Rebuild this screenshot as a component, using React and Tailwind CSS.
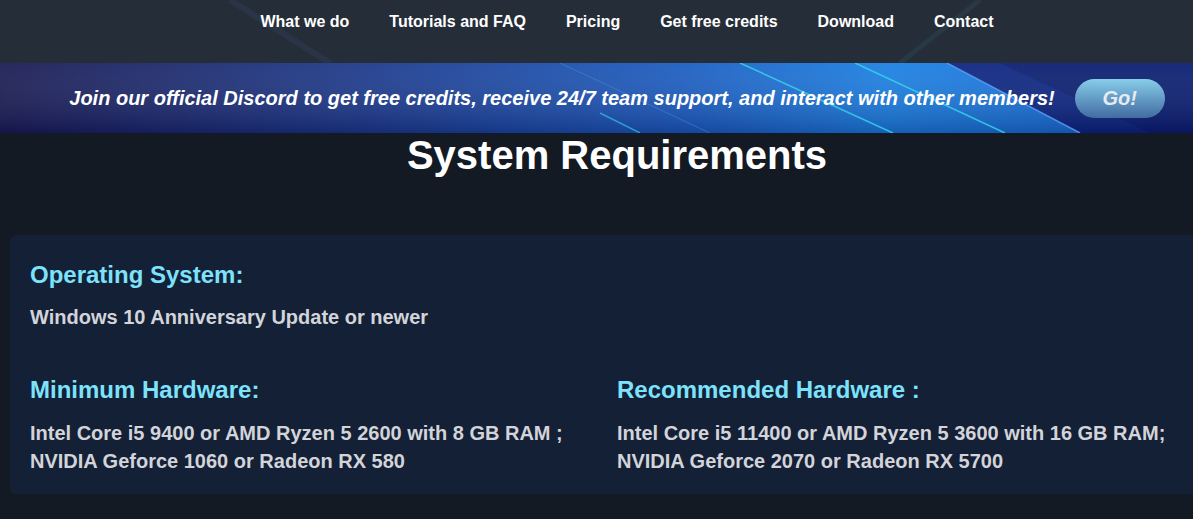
import React from 'react';

const navLinks = ['What we do', 'Tutorials and FAQ', 'Pricing', 'Get free credits', 'Download', 'Contact'];

const BannerLines = () => (
  <svg className="absolute inset-0 h-full w-full" viewBox="0 0 1234 70" preserveAspectRatio="none">
    <defs>
      <linearGradient id="bannerBg" x1="0" y1="0" x2="1" y2="0">
        <stop offset="0" stopColor="#1a1b52" />
        <stop offset="0.3" stopColor="#1c3a8c" />
        <stop offset="0.55" stopColor="#1b5cc0" />
        <stop offset="0.72" stopColor="#1a80e2" />
        <stop offset="0.85" stopColor="#1972d8" />
      </linearGradient>
      <linearGradient id="bannerShade" x1="0" y1="0" x2="0" y2="1">
        <stop offset="0" stopColor="#ffffff" stopOpacity="0.06" />
        <stop offset="1" stopColor="#000030" stopOpacity="0.25" />
      </linearGradient>
    </defs>
    <rect width="1234" height="70" fill="url(#bannerBg)" />
    <polygon points="947,0 1234,0 1234,70 1080,70" fill="#0c2580" />
    <polygon points="1000,0 1234,0 1234,70 1150,70" fill="#0a1a6a" opacity="0.7" />
    <rect width="1234" height="70" fill="url(#bannerShade)" />
    <line x1="740" y1="0" x2="893" y2="70" stroke="#38d6ee" strokeWidth="1.6" opacity="0.8" />
    <line x1="855" y1="0" x2="1005" y2="70" stroke="#38d6ee" strokeWidth="1.6" opacity="0.8" />
    <line x1="947" y1="0" x2="1080" y2="70" stroke="#5fa0ff" strokeWidth="1.5" opacity="0.8" />
    <line x1="600" y1="50" x2="640" y2="70" stroke="#38d6ee" strokeWidth="1.4" opacity="0.6" />
    <line x1="560" y1="0" x2="710" y2="70" stroke="#49b0f0" strokeWidth="1" opacity="0.35" />
  </svg>
);

export default function App() {
  return (
    <div className="min-h-screen w-full overflow-hidden bg-[#131a24]" style={{ fontFamily: '"Liberation Sans", Arial, sans-serif' }}>
      <div className="w-[1234px]">
        <header className="relative h-[63px] overflow-hidden bg-[#252d38]">
          <svg className="absolute inset-0 h-full w-full" viewBox="0 0 1234 63" preserveAspectRatio="none">
            <line x1="230" y1="0" x2="330" y2="63" stroke="#3a5680" strokeWidth="6" opacity="0.2" />
            <line x1="980" y1="0" x2="900" y2="63" stroke="#3a6a80" strokeWidth="5" opacity="0.18" />
          </svg>
          <nav className="relative flex justify-center gap-10 pl-[20px] pt-[10px]">
            {navLinks.map((l) => (
              <a key={l} className="text-[16px] font-bold leading-6 text-white">
                {l}
              </a>
            ))}
          </nav>
        </header>

        <div className="relative h-[70px] overflow-hidden">
          <BannerLines />
          <div className="relative flex h-full items-center justify-center gap-5">
            <p className="text-[20px] font-bold italic text-white">
              Join our official Discord to get free credits, receive 24/7 team support, and interact with other members!
            </p>
            <button className="h-[39px] w-[90px] rounded-full bg-gradient-to-b from-[#93e0f6] to-[#4874a8] text-[20px] font-bold italic text-white opacity-90">
              Go!
            </button>
          </div>
        </div>

        <h1 className="text-center text-[40px] font-bold leading-[44px] text-white">System Requirements</h1>

        <section className="mx-[10px] mt-[58px] rounded-md bg-[#132036] px-5 pb-[19px] pt-6">
          <h2 className="text-2xl font-bold text-[#7de2fb]">Operating System:</h2>
          <p className="mt-3 text-[20px] font-bold leading-7 text-[#d3d4da]">Windows 10 Anniversary Update or newer</p>

          <div className="mt-[43px] grid grid-cols-2">
            <div>
              <h2 className="text-2xl font-bold text-[#7de2fb]">Minimum Hardware:</h2>
              <p className="mt-[13px] text-[20px] font-bold leading-7 text-[#d3d4da]">
                Intel Core i5 9400 or AMD Ryzen 5 2600 with 8 GB RAM ;
                <br />
                NVIDIA Geforce 1060 or Radeon RX 580
              </p>
            </div>
            <div>
              <h2 className="text-2xl font-bold text-[#7de2fb]">Recommended Hardware :</h2>
              <p className="mt-[13px] text-[20px] font-bold leading-7 text-[#d3d4da]">
                Intel Core i5 11400 or AMD Ryzen 5 3600 with 16 GB RAM;
                <br />
                NVIDIA Geforce 2070 or Radeon RX 5700
              </p>
            </div>
          </div>
        </section>
      </div>
    </div>
  );
}
